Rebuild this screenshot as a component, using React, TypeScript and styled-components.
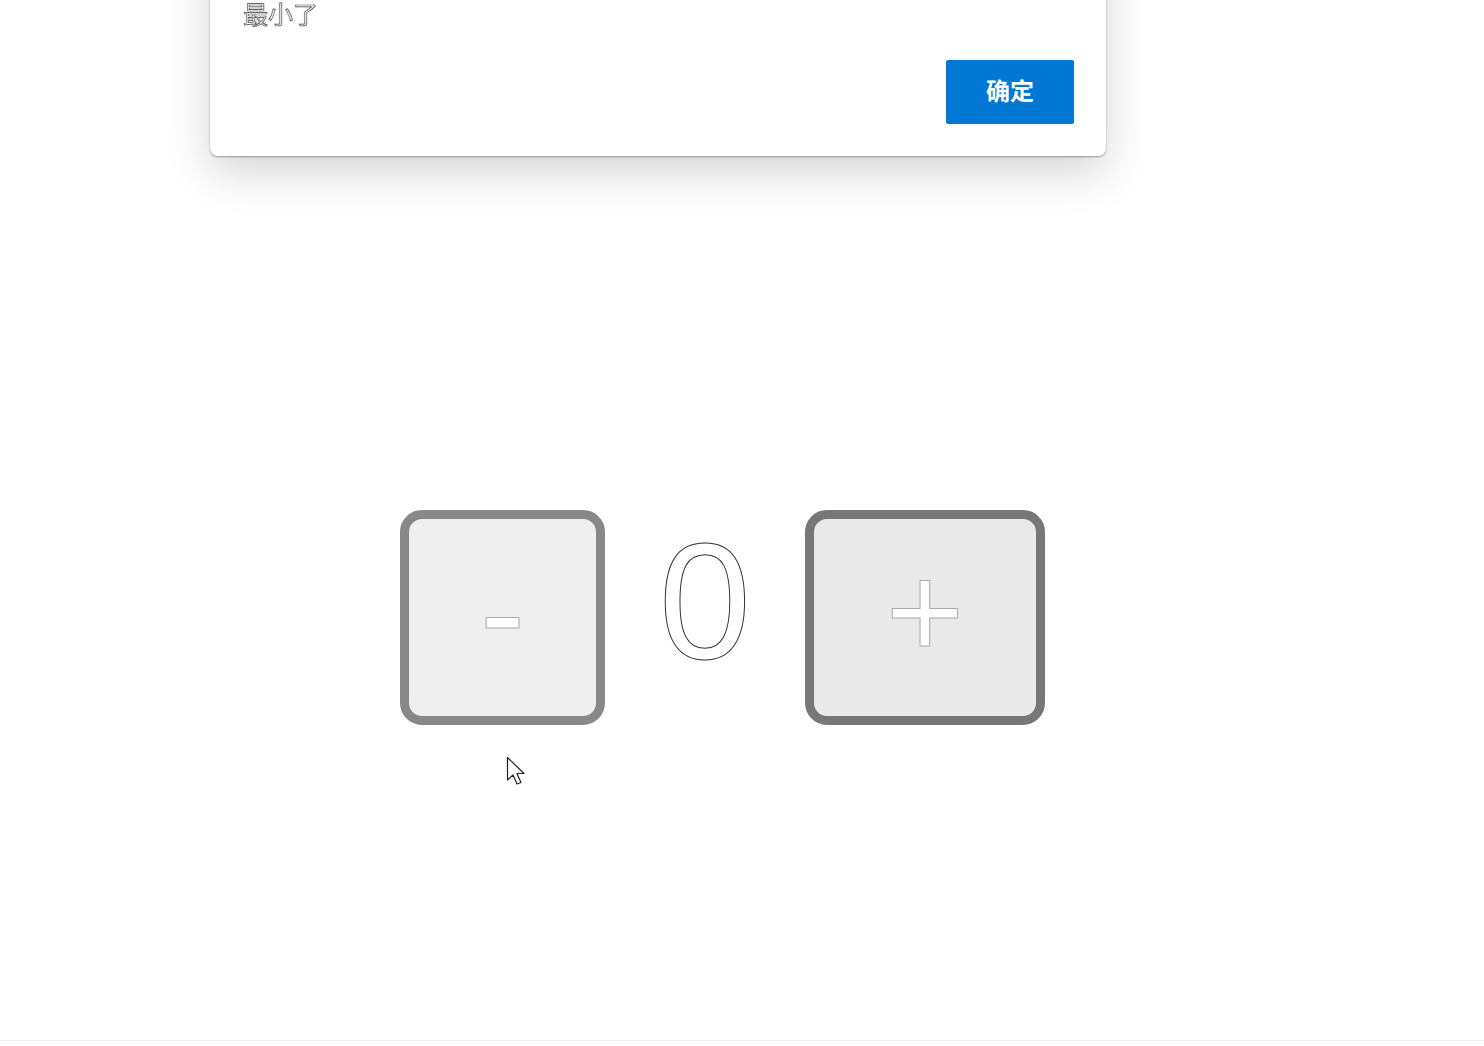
import React, { useState } from "react";
import styled, { createGlobalStyle } from "styled-components";

const Global = createGlobalStyle`
  html, body { margin: 0; padding: 0; background: #fff; }
  body { font-family: "Liberation Sans", "Noto Sans CJK SC", sans-serif; overflow: hidden; }
`;

const Page = styled.div`
  position: relative;
  width: 1484px;
  height: 1046px;
  overflow: hidden;
  display: flex;
  flex-direction: column;
`;

const Dialog = styled.div`
  margin: -60px 0 0 210px;
  width: 896px;
  box-sizing: border-box;
  padding: 58px 32px 32px 33px;
  background: #fff;
  border-radius: 8px;
  box-shadow: 0 1px 2px rgba(0, 0, 0, 0.35), 0 16px 44px rgba(0, 0, 0, 0.17);
  display: flex;
  flex-direction: column;
`;

const Message = styled.div`
  font-family: "Noto Sans CJK SC", sans-serif;
  font-size: 25px;
  line-height: 30px;
  color: #fff;
  -webkit-text-stroke: 0.7px #444;
`;

const Actions = styled.div`
  display: flex;
  justify-content: flex-end;
  margin-top: 32px;
`;

const PrimaryButton = styled.button`
  width: 128px;
  height: 64px;
  border: none;
  border-radius: 2px;
  background: #0078d4;
  color: #fff;
  font-family: "Noto Sans CJK SC", sans-serif;
  font-weight: 700;
  font-size: 24px;
  padding: 0 0 5px;
  cursor: pointer;
`;

const Counter = styled.div`
  display: flex;
  align-items: center;
  margin: 354px 0 0 400px;
`;

const StepButton = styled.button<{ $w: number; $border: string; $bg: string }>`
  width: ${(p) => p.$w}px;
  height: 215px;
  box-sizing: border-box;
  border: 9px solid ${(p) => p.$border};
  border-radius: 22px;
  background: ${(p) => p.$bg};
  color: #fff;
  font-family: "Liberation Sans", sans-serif;
  font-size: 134px;
  line-height: 1;
  padding: 0 0 12px;
  display: flex;
  align-items: center;
  justify-content: center;
  -webkit-text-stroke: 1px #aaa;
  cursor: pointer;
`;

const Value = styled.div`
  width: 200px;
  text-align: center;
  font-family: "Liberation Sans", sans-serif;
  font-size: 166px;
  line-height: 1;
  color: #fff;
  -webkit-text-stroke: 1px #333;
  padding-bottom: 34px;
`;

const BottomRule = styled.div`
  position: absolute;
  left: 0;
  right: 0;
  top: 1040px;
  height: 1px;
  background: #eeeeee;
`;

const Cursor = styled.svg`
  position: absolute;
  left: 506px;
  top: 756px;
`;

export default function App() {
  const [count, setCount] = useState(0);
  return (
    <Page>
      <Global />
      <Dialog>
        <Message>最小了</Message>
        <Actions>
          <PrimaryButton>确定</PrimaryButton>
        </Actions>
      </Dialog>
      <Counter>
        <StepButton $w={205} $border="#888888" $bg="#efefef" onClick={() => setCount((c) => Math.max(0, c - 1))}>
          -
        </StepButton>
        <Value>{count}</Value>
        <StepButton $w={240} $border="#777777" $bg="#e9e9e9" onClick={() => setCount((c) => c + 1)}>
          +
        </StepButton>
      </Counter>
      <BottomRule />
      <Cursor width="24" height="36" viewBox="0 0 24 36">
        <path d="M1.5 1.5 L1.5 24 L7 19 L11 28 L15 26.5 L11 17.5 L18 17.5 Z" fill="#fff" stroke="#222" strokeWidth="1.2" strokeLinejoin="round" />
      </Cursor>
    </Page>
  );
}
